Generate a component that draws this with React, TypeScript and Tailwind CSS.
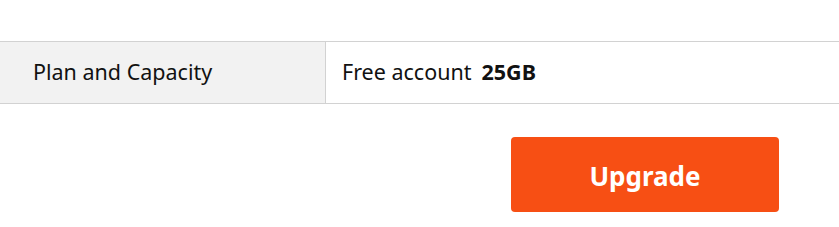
export default function App() {
  return (
    <div className="w-[839px] h-[227px] bg-white pt-[41px]" style={{ fontFamily: '"Noto Sans", "Liberation Sans", sans-serif' }}>
      <div className="flex h-[63px] border-y border-[#d2d2d2]">
        <div className="w-[326px] shrink-0 bg-[#f2f2f2] border-r border-[#d2d2d2] flex items-center pl-[33px] text-[21.5px] text-[#111]">
          Plan and Capacity
        </div>
        <div className="flex-1 flex items-center pl-[16px] text-[21.5px] text-[#111]">
          <span>Free account</span>
          <span className="font-bold ml-[10px]">25GB</span>
        </div>
      </div>
      <div className="flex justify-end pr-[60px] pt-[33px]">
        <button className="w-[268px] h-[75px] rounded-[4px] bg-[#f74f14] text-white font-bold text-[26px] pt-[3px]">
          Upgrade
        </button>
      </div>
    </div>
  );
}
